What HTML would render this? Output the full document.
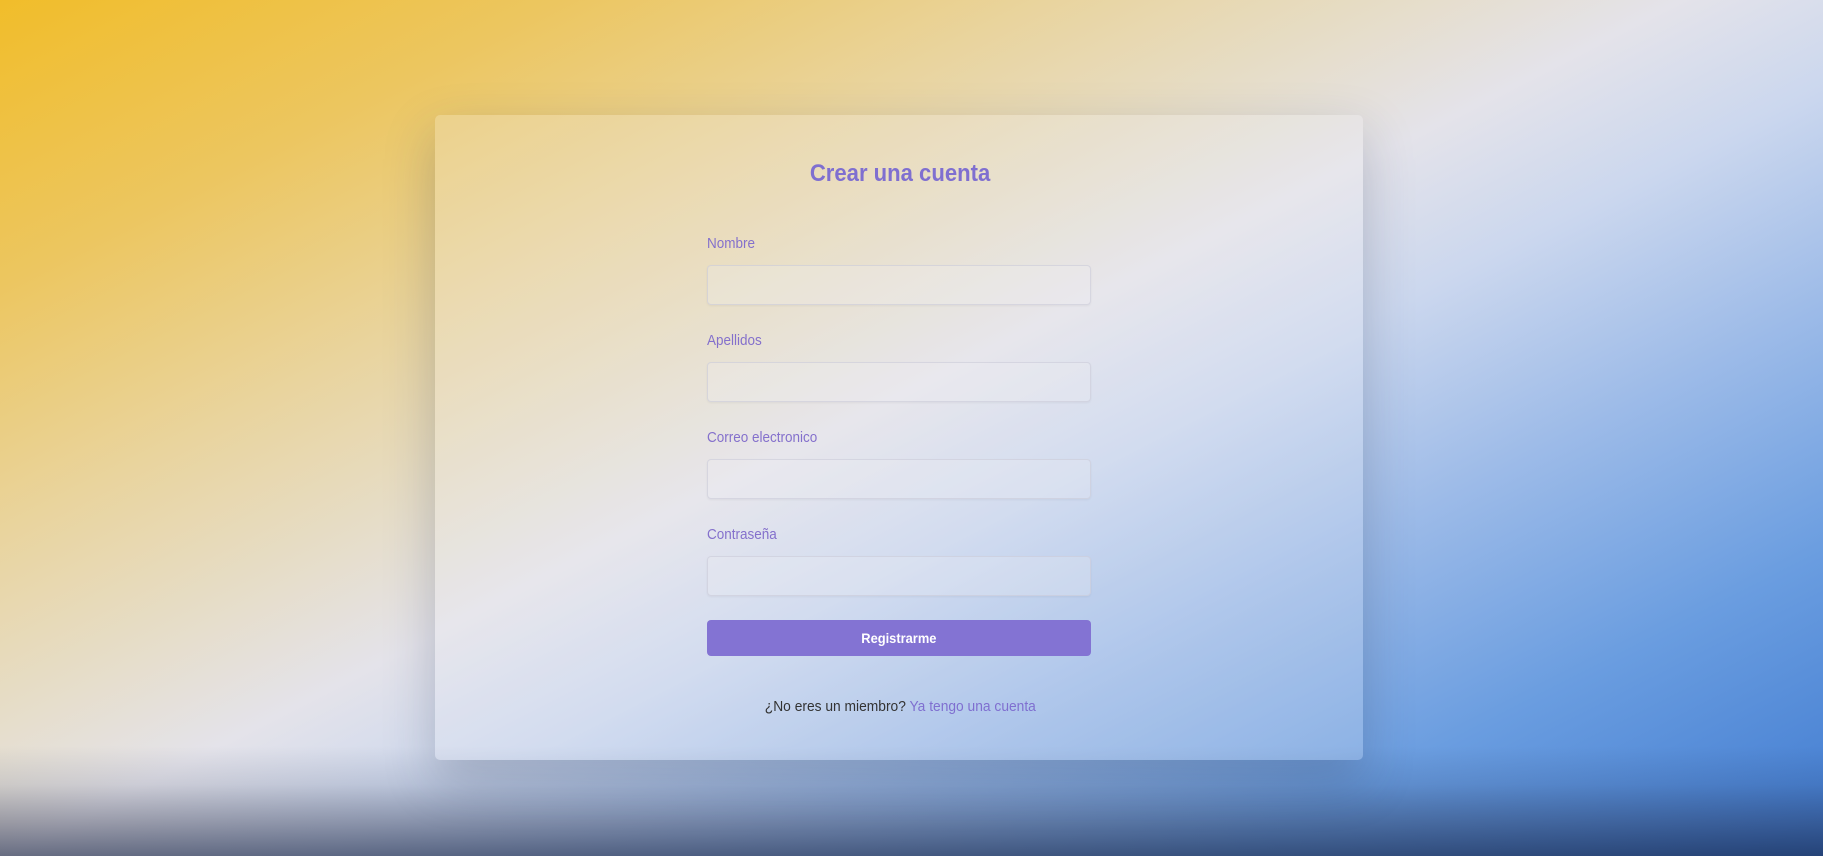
<!DOCTYPE html>
<html><head><meta charset="utf-8"><style>
html,body{margin:0;padding:0;width:1823px;height:856px;overflow:hidden;font-family:"Liberation Sans",sans-serif;}
body{position:relative;background:linear-gradient(153deg,#f1bd2a 0%,#ecc660 16%,#e9d49e 30%,#e6ddc8 40%,#e4e3ea 48%,#cbd7ee 57%,#9dbbe8 69%,#6a9de0 83%,#3f7ad0 100%);}
.shade{position:absolute;left:0;right:0;bottom:0;height:110px;background:linear-gradient(to bottom,rgba(30,40,70,0) 0%,rgba(30,40,70,.12) 35%,rgba(30,35,60,.38) 70%,rgba(20,30,60,.6) 100%);}
.card{position:absolute;left:435px;top:115px;width:928px;height:645px;background:rgba(240,240,245,.22);border-radius:5px;box-shadow:0 20px 50px rgba(40,50,80,.25);}
h1{position:absolute;left:0;width:1800px;top:160px;margin:0;text-align:center;font-size:24px;font-weight:bold;color:#7f6fd0;}
.sq{display:inline-block;transform:scaleX(.92);}
.lbl{position:absolute;left:707px;font-size:15px;color:#8470cc;transform-origin:left;transform:scaleX(.9);}
.inp{position:absolute;left:707px;width:382px;height:38px;border:1px solid rgba(200,200,215,.6);border-radius:4px;background:rgba(240,240,245,.25);box-shadow:0 1px 2px rgba(0,0,0,.05);}
.btn{position:absolute;left:707px;top:620px;width:384px;height:36px;background:#8373d3;border-radius:4px;color:#fff;font-weight:bold;font-size:14px;text-align:center;line-height:36px;}
.foot{position:absolute;left:0;width:1800px;top:698px;text-align:center;font-size:15px;color:#333;}
.foot span{color:#7f6fd0;}
</style></head><body>
<div class="shade"></div>
<div class="card"></div>
<h1><span class="sq">Crear una cuenta</span></h1>
<div class="lbl" style="top:235px">Nombre</div>
<div class="inp" style="top:265px"></div>
<div class="lbl" style="top:332px">Apellidos</div>
<div class="inp" style="top:362px"></div>
<div class="lbl" style="top:429px">Correo electronico</div>
<div class="inp" style="top:459px"></div>
<div class="lbl" style="top:526px">Contraseña</div>
<div class="inp" style="top:556px"></div>
<div class="btn"><span class="sq">Registrarme</span></div>
<div class="foot"><span class="sq" style="color:#333">¿No eres un miembro? <span>Ya tengo una cuenta</span></span></div>
</body></html>
